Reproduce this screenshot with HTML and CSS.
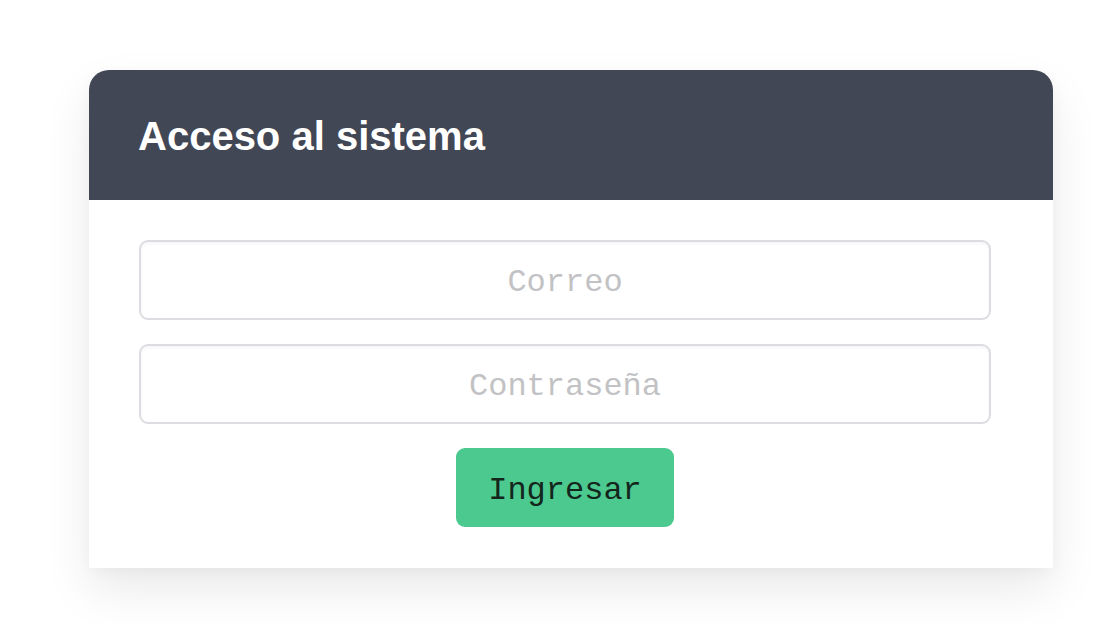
FILE: index.html
```html
<!DOCTYPE html>
<html lang="es">
<head>
<meta charset="utf-8">
<title>Acceso al sistema</title>
<link rel="stylesheet" href="styles.css">
</head>
<body>
<div class="page">
  <div class="card">
    <div class="card-header">
      <h1 class="title">Acceso al sistema</h1>
    </div>
    <form class="card-body">
      <input class="field" type="email" placeholder="Correo">
      <input class="field" type="password" placeholder="Contraseña">
      <button class="btn" type="button">Ingresar</button>
    </form>
  </div>
</div>
</body>
</html>
```
FILE: styles.css
```css
* { box-sizing: border-box; }
html, body { margin: 0; padding: 0; background: #ffffff; }
.page {
  padding: 70px 55px 56px 89px;
}
.card {
  width: 964px;
  background: #ffffff;
  border-radius: 20px 20px 0 0;
  box-shadow: 0 22px 48px rgba(0, 0, 0, 0.085), 0 4px 14px rgba(0, 0, 0, 0.03);
}
.card-header {
  height: 130px;
  background: #424755;
  border-radius: 20px 20px 0 0;
  display: flex;
  align-items: center;
  padding-left: 49px;
  padding-top: 3px;
}
.title {
  margin: 0;
  color: #ffffff;
  font-family: "Liberation Sans", Arial, sans-serif;
  font-weight: 700;
  font-size: 40px;
  letter-spacing: 0;
}
.card-body {
  margin: 0;
  padding: 40px 62px 41px 50px;
  display: flex;
  flex-direction: column;
  align-items: stretch;
}
.field {
  height: 80px;
  border: 2px solid #dcdce1;
  border-radius: 9px;
  box-shadow: inset 0 2px 3px rgba(0, 0, 0, 0.04);
  font-family: "Liberation Mono", "Courier New", monospace;
  font-size: 32px;
  text-align: center;
  color: #333;
  background: #fff;
  outline: none;
  padding: 4px 0 0 0;
  margin: 0 0 24px 0;
}
.field::placeholder { color: #c2c2c4; }
.btn {
  align-self: center;
  width: 218px;
  height: 79px;
  margin-top: 0;
  border: none;
  border-radius: 9px;
  background: #4bc98f;
  color: #14261c;
  font-family: "Liberation Mono", "Courier New", monospace;
  font-size: 32px;
  padding-top: 7px;
  cursor: pointer;
}
```
